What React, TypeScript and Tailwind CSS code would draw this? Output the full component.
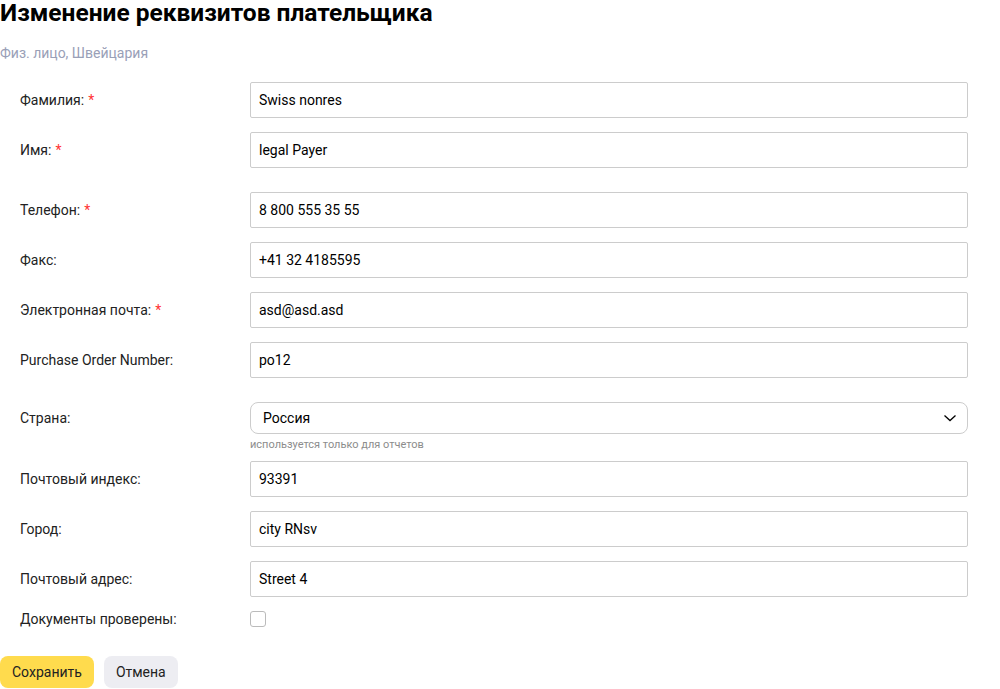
type Field = { label: string; value: string; required?: boolean };

const group1: Field[] = [
  { label: 'Фамилия:', value: 'Swiss nonres', required: true },
  { label: 'Имя:', value: 'legal Payer', required: true },
];

const group2: Field[] = [
  { label: 'Телефон:', value: '8 800 555 35 55', required: true },
  { label: 'Факс:', value: '+41 32 4185595' },
  { label: 'Электронная почта:', value: 'asd@asd.asd', required: true },
  { label: 'Purchase Order Number:', value: 'po12' },
];

const group3: Field[] = [
  { label: 'Почтовый индекс:', value: '93391' },
  { label: 'Город:', value: 'city RNsv' },
  { label: 'Почтовый адрес:', value: 'Street 4' },
];

function Row({ field }: { field: Field }) {
  return (
    <div className="flex items-center h-9">
      <div className="w-[250px] pl-5 text-sm text-[#222]">
        {field.label}
        {field.required && <span className="text-[#f33] ml-1">*</span>}
      </div>
      <input
        defaultValue={field.value}
        className="w-[718px] h-9 border border-[#ccc] rounded-[2px] px-2 text-sm text-black outline-none"
      />
    </div>
  );
}

export default function App() {
  return (
    <div className="bg-white min-h-screen font-['Roboto',sans-serif] text-black">
      <h1 className="text-[24.5px] font-bold leading-7 -mt-[1px]">Изменение реквизитов плательщика</h1>
      <div className="text-sm text-[#99a0b7] mt-[16px] leading-5">Физ. лицо, Швейцария</div>

      <div className="mt-[19px] flex flex-col gap-[14px]">
        {group1.map((f) => (
          <Row key={f.label} field={f} />
        ))}
      </div>

      <div className="mt-6 flex flex-col gap-[14px]">
        {group2.map((f) => (
          <Row key={f.label} field={f} />
        ))}
      </div>

      <div className="mt-6 flex items-start">
        <div className="w-[250px] pl-5 text-sm text-[#222] h-8 flex items-center">Страна:</div>
        <div className="w-[718px]">
          <div className="h-8 border border-[#ccc] rounded-lg flex items-center justify-between pl-3 pr-2.5 text-sm">
            <span>Россия</span>
            <svg width="14" height="14" viewBox="0 0 14 14" fill="none">
              <path d="M1.5 4.5L7 9.5L12.5 4.5" stroke="#000" strokeWidth="1.3" />
            </svg>
          </div>
          <div className="text-[11px] text-[#8c8c8c] leading-4 mt-[3px]">используется только для отчетов</div>
        </div>
      </div>

      <div className="mt-[8px] flex flex-col gap-[14px]">
        {group3.map((f) => (
          <Row key={f.label} field={f} />
        ))}
      </div>

      <div className="flex items-center h-4 mt-[14px]">
        <div className="w-[250px] pl-5 text-sm text-[#222]">Документы проверены:</div>
        <div className="w-4 h-4 border border-[#bbb] rounded-[3px]" />
      </div>

      <div className="flex gap-2.5 mt-[29px]">
        <button className="h-8 px-3 rounded-lg bg-[#ffdb4d] text-sm text-[#222]">Сохранить</button>
        <button className="h-8 px-3 rounded-lg bg-[#ededf2] text-sm text-[#222]">Отмена</button>
      </div>
    </div>
  );
}
